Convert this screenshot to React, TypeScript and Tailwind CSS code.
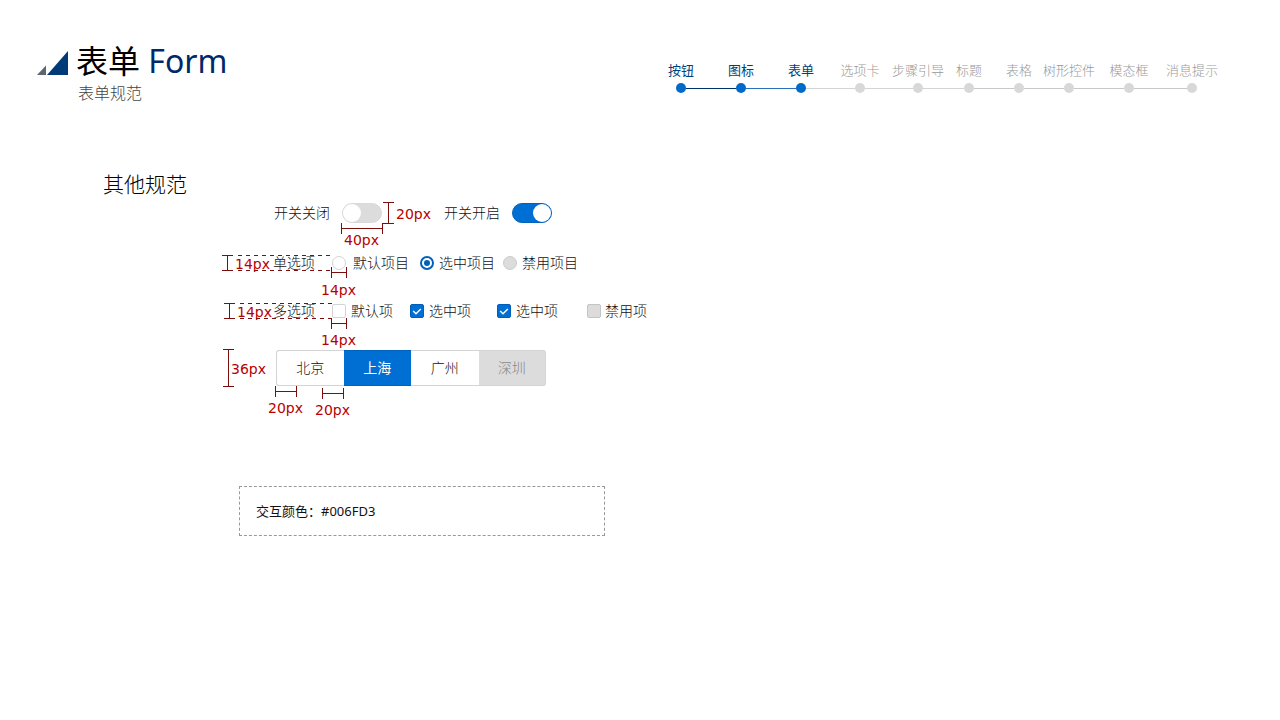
import { useState } from "react"
import clsx from "clsx"

interface Step {
  title: string
  width: string
  done: boolean
  before: string
  after: string
}

const steps: Step[] = [
  { title: "按钮", width: "w-[60px]", done: true, before: "bg-transparent", after: "bg-[#003468]" },
  { title: "图标", width: "w-[60px]", done: true, before: "bg-[#003468]", after: "bg-[#2a72b8]" },
  { title: "表单", width: "w-[60px]", done: true, before: "bg-[#2a72b8]", after: "bg-[#d4d4d4]" },
  { title: "选项卡", width: "w-[58px]", done: false, before: "bg-[#d4d4d4]", after: "bg-[#d4d4d4]" },
  { title: "步骤引导", width: "w-[58px]", done: false, before: "bg-[#d4d4d4]", after: "bg-[#d4d4d4]" },
  { title: "标题", width: "w-[44px]", done: false, before: "bg-[#d4d4d4]", after: "bg-[#c8c8c8]" },
  { title: "表格", width: "w-[56px]", done: false, before: "bg-[#c8c8c8]", after: "bg-[#c8c8c8]" },
  { title: "树形控件", width: "w-[44px]", done: false, before: "bg-[#c8c8c8]", after: "bg-[#c8c8c8]" },
  { title: "模态框", width: "w-[76px]", done: false, before: "bg-[#c8c8c8]", after: "bg-[#c8c8c8]" },
  { title: "消息提示", width: "w-[50px]", done: false, before: "bg-[#c8c8c8]", after: "bg-transparent" },
]

const cities = [
  { name: "北京", disabled: false },
  { name: "上海", disabled: false },
  { name: "广州", disabled: false },
  { name: "深圳", disabled: true },
]

// |---| with the size written by the caller
function HBar({ className }: { className: string }) {
  return (
    <span className={clsx("absolute flex h-[11px] items-center border-x border-[#7d0c0c]", className)}>
      <span className="h-px w-full bg-[#7d0c0c]" />
    </span>
  )
}

function VBar({ className }: { className: string }) {
  return (
    <span className={clsx("absolute flex w-[11px] justify-center border-y border-[#7d0c0c]", className)}>
      <span className="h-full w-px bg-[#7d0c0c]" />
    </span>
  )
}

function Size({ className, children }: { className: string; children: string }) {
  return (
    <span
      className={clsx(
        "absolute whitespace-nowrap font-['DejaVu_Sans',sans-serif] text-sm leading-4 font-normal text-[#b80000]",
        className
      )}
    >
      {children}
    </span>
  )
}

// dashed guide lines from the mark to the control
function Guides({ className }: { className: string }) {
  return (
    <span
      className={clsx(
        "absolute h-4 w-[92px] bg-[repeating-linear-gradient(90deg,#7d0c0c_0_4px,transparent_4px_8px),repeating-linear-gradient(90deg,#7d0c0c_0_4px,transparent_4px_8px)] bg-[length:100%_1px,100%_1px] bg-[position:top,bottom] bg-no-repeat",
        className
      )}
    />
  )
}

function Switch({ id, defaultOn }: { id: string; defaultOn: boolean }) {
  const [on, setOn] = useState(defaultOn)
  return (
    <button
      id={id}
      type="button"
      role="switch"
      aria-checked={on}
      onClick={() => setOn(!on)}
      className={clsx(
        "flex h-5 w-10 items-center rounded-full border",
        on ? "justify-end border-[#0062bd] bg-[#006fd3]" : "justify-start border-[#d9d9d9] bg-[#dcdcdc]"
      )}
    >
      <span className="size-[18px] rounded-full bg-white" />
    </button>
  )
}

function Radio({ id, checked, disabled }: { id: string; checked?: boolean; disabled?: boolean }) {
  return (
    <input
      id={id}
      type="radio"
      name="item"
      defaultChecked={checked}
      disabled={disabled}
      className="grid size-[14px] shrink-0 appearance-none place-content-center rounded-full border border-[#d4d4d4] bg-white before:size-1.5 before:rounded-full checked:border-2 checked:border-[#0062bd] checked:before:bg-[#0062bd] disabled:border-[#cccccc] disabled:bg-[#dcdcdc]"
    />
  )
}

function Check({ id, checked, disabled }: { id: string; checked?: boolean; disabled?: boolean }) {
  return (
    <span className="relative flex">
      <input
        id={id}
        type="checkbox"
        defaultChecked={checked}
        disabled={disabled}
        className="peer size-[14px] appearance-none rounded-xs border border-[#d4d4d4] bg-white checked:border-[#005fb8] checked:bg-[#006fd3] disabled:border-[#c4c4c4] disabled:bg-[#dcdcdc]"
      />
      <svg
        viewBox="0 0 14 14"
        className="pointer-events-none absolute inset-0 hidden size-[14px] peer-checked:block"
        fill="none"
        stroke="#fff"
        strokeWidth="1.4"
      >
        <path d="M3.2 7l2.8 2.7L10.8 5" />
      </svg>
    </span>
  )
}

function StepNav() {
  return (
    <nav>
      <ol className="flex text-[13px] leading-5">
        {steps.map((step) => (
          <li key={step.title} className={clsx("flex flex-col items-center gap-[3px]", step.width)}>
            <a
              href="#"
              className={clsx("whitespace-nowrap", step.done ? "text-[#003f7d]" : "font-light text-[#999999]")}
            >
              {step.title}
            </a>
            <div className="flex w-full items-center">
              <span className={clsx("h-px flex-1", step.before)} />
              <span className={clsx("size-[10px] rounded-full", step.done ? "bg-[#006acb]" : "bg-[#d8d8d8]")} />
              <span className={clsx("h-px flex-1", step.after)} />
            </div>
          </li>
        ))}
      </ol>
    </nav>
  )
}

export default function App() {
  const [city, setCity] = useState("上海")

  return (
    <div className="min-h-screen bg-white font-['Noto_Sans','Noto_Sans_CJK_SC',sans-serif] text-[#111111]">
      <header className="flex items-start justify-between pt-[41px] pr-[63px] pl-[37px]">
        <div className="flex gap-2">
          <svg viewBox="0 0 31 24" className="mt-[10px] h-6 w-[31px]">
            <path d="M0 24L9 14.500V24z" fill="#5b6675" />
            <path d="M10 24L31 0V24z" fill="#003a78" />
          </svg>
          <div>
            <h1 className="text-[32px] leading-10 text-black">
              表单 <span className="text-[#00296b]">Form</span>
            </h1>
            <p className="pt-px pl-0.5 text-base leading-[22px] font-light text-[#444444]">表单规范</p>
          </div>
        </div>
        <div className="pt-[19px]">
          <StepNav />
        </div>
      </header>

      <main className="pt-[65px] pl-[103px]">
        <h2 className="text-[21px] leading-[30px] font-light text-black">其他规范</h2>

        <form className="flex flex-col pt-1 pl-[170px] text-sm leading-5 font-light">
          <div className="flex h-5 items-center pl-px">
            <label htmlFor="switch-off" className="pr-3">开关关闭</label>
            <div className="relative mr-[62px]">
              <Switch id="switch-off" defaultOn={false} />
              <HBar className="top-5 -left-px w-[42px]" />
              <Size className="top-[29px] left-0.5">40px</Size>
              <VBar className="-top-px left-[41px] h-[22px]" />
              <Size className="top-[3px] left-[54px]">20px</Size>
            </div>
            <label htmlFor="switch-on" className="pr-3">开关开启</label>
            <Switch id="switch-on" defaultOn={true} />
          </div>

          <fieldset className="relative mt-[30px] flex h-5 items-center">
            <VBar className="top-0.5 -left-[51px] h-4" />
            <Guides className="top-0.5 -left-[35px]" />
            <Size className="top-[3px] -left-[38px]">14px</Size>
            <span className="w-[59px]">单选项</span>
            <div className="relative mr-[7px]">
              <Radio id="radio-default" />
              <HBar className="top-[11px] -left-px w-4" />
              <Size className="top-[26px] -left-[11px]">14px</Size>
            </div>
            <label htmlFor="radio-default" className="mr-[11px]">默认项目</label>
            <Radio id="radio-checked" checked />
            <label htmlFor="radio-checked" className="mr-2 ml-[5px]">选中项目</label>
            <Radio id="radio-disabled" disabled />
            <label htmlFor="radio-disabled" className="ml-[5px]">禁用项目</label>
          </fieldset>

          <fieldset className="relative mt-7 flex h-5 items-center">
            <VBar className="top-0.5 -left-[49px] h-4" />
            <Guides className="top-0.5 -left-[33px]" />
            <Size className="top-[3px] -left-9">14px</Size>
            <span className="w-[59px]">多选项</span>
            <div className="relative mr-[5px]">
              <Check id="check-default" />
              <HBar className="top-[14px] -left-px w-4" />
              <Size className="top-7 -left-[11px]">14px</Size>
            </div>
            <label htmlFor="check-default" className="mr-[17px]">默认项</label>
            <Check id="check-a" checked />
            <label htmlFor="check-a" className="mr-[26px] ml-[5px]">选中项</label>
            <Check id="check-b" checked />
            <label htmlFor="check-b" className="mr-[29px] ml-[5px]">选中项</label>
            <Check id="check-disabled" disabled />
            <label htmlFor="check-disabled" className="ml-1">禁用项</label>
          </fieldset>

          <div
            className="relative mt-[29px] ml-[3px] grid h-9 w-[270px] grid-cols-4"
            role="group"
            aria-label="城市"
          >
            {cities.map((item, i) => (
              <button
                key={item.name}
                type="button"
                disabled={item.disabled}
                aria-pressed={city === item.name}
                onClick={() => setCity(item.name)}
                className={clsx(
                  "border-y",
                  i === 0 && "rounded-l-[3px] border-l",
                  i === cities.length - 1 && "rounded-r-[3px] border-r",
                  city === item.name
                    ? "border-[#0062bd] bg-[#006fd3] font-normal text-white"
                    : item.disabled
                      ? "border-[#d4d4d4] bg-[#dcdcdc] text-[#888888]"
                      : "border-[#d4d4d4] bg-white"
                )}
              >
                {item.name}
              </button>
            ))}
            <VBar className="-top-px -left-[53px] h-[38px]" />
            <Size className="top-[11px] -left-[45px]">36px</Size>
            <HBar className="top-9 -left-px w-[22px]" />
            <Size className="top-[50px] -left-2">20px</Size>
            <HBar className="top-[38px] left-[46px] w-[22px]" />
            <Size className="top-[52px] left-[39px]">20px</Size>
          </div>
        </form>

        <p className="mt-[100px] ml-[136px] w-[366px] border border-dashed border-[#999999] px-4 py-[14px] text-[13px] leading-5 text-[#111111]">
          交互颜色：#006FD3
        </p>
      </main>
    </div>
  )
}
